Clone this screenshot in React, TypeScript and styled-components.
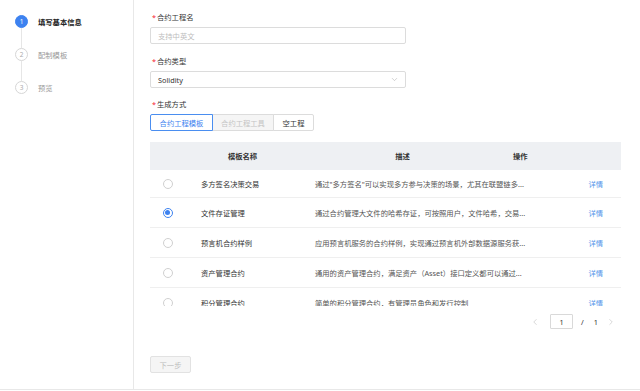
import React from 'react';
import styled, { createGlobalStyle } from 'styled-components';
import { ChevronDown, ChevronLeft, ChevronRight } from 'lucide-react';

const Global = createGlobalStyle`
  html, body { margin: 0; padding: 0; background: #fff; }
  body { font-family: "Noto Sans", "Noto Sans CJK SC", sans-serif; color: #333; }
  * { box-sizing: border-box; }
`;

const FS = '7.3px';
const BLUE = '#3d82f0';

const Page = styled.div`
  display: flex;
  width: 640px;
  height: 390px;
  border-bottom: 1px solid #e8e8e8;
  background: #fff;
  font-size: ${FS};
`;

const Sidebar = styled.aside`
  width: 134px;
  flex-shrink: 0;
  border-right: 1px solid #e8e8e8;
  padding: 15px 0 0 15px;
  display: flex;
  flex-direction: column;
`;

const Step = styled.div`
  display: flex;
  align-items: center;
  gap: 10px;
  height: 13px;
`;

const StepDot = styled.span<{ $active?: boolean }>`
  width: 13px;
  height: 13px;
  border-radius: 50%;
  display: flex;
  align-items: center;
  justify-content: center;
  font-size: 6.5px;
  background: ${p => (p.$active ? BLUE : '#fff')};
  color: ${p => (p.$active ? '#fff' : '#aaa')};
  border: 1px solid ${p => (p.$active ? BLUE : '#d6d6d6')};
`;

const StepText = styled.span<{ $active?: boolean }>`
  color: ${p => (p.$active ? '#222' : '#999')};
  font-weight: ${p => (p.$active ? 600 : 400)};
`;

const Connector = styled.div`
  width: 1px;
  height: 20px;
  margin-left: 6px;
  background: #e6e6e6;
`;

const Main = styled.main`
  flex: 1;
  padding: 12px 19px 0 16px;
  display: flex;
  flex-direction: column;
`;

const Label = styled.div<{ $mt?: number }>`
  height: 10px;
  line-height: 10px;
  margin-top: ${p => p.$mt ?? 0}px;
  margin-bottom: 5px;
  color: #333;
  display: flex;
  align-items: center;
`;

const Star = styled.span`
  color: #f5222d;
  width: 7px;
  padding-left: 2px;
`;

const TextInput = styled.input`
  width: 256px;
  height: 17px;
  border: 1px solid #dcdcdc;
  border-radius: 2px;
  padding: 0 7px;
  font-family: inherit;
  font-size: ${FS};
  color: #333;
  outline: none;
  &::placeholder { color: #bdbdbd; }
`;

const Select = styled.div`
  width: 256px;
  height: 17px;
  border: 1px solid #dcdcdc;
  border-radius: 2px;
  padding: 0 6px 0 7px;
  display: flex;
  align-items: center;
  justify-content: space-between;
  color: #333;
`;

const Segments = styled.div`
  display: flex;
  height: 17px;
`;

const Segment = styled.div<{ $w: number; $state: 'active' | 'disabled' | 'normal' }>`
  width: ${p => p.$w}px;
  display: flex;
  align-items: center;
  justify-content: center;
  border: 1px solid ${p => (p.$state === 'active' ? '#4a8ef0' : '#dcdcdc')};
  margin-left: ${p => (p.$state === 'active' ? 0 : -1)}px;
  background: ${p => (p.$state === 'disabled' ? '#f5f5f5' : '#fff')};
  color: ${p => (p.$state === 'active' ? '#3d82f0' : p.$state === 'disabled' ? '#c4c4c4' : '#333')};
  position: relative;
  z-index: ${p => (p.$state === 'active' ? 1 : 0)};
  &:first-child { border-radius: 2px 0 0 2px; }
  &:last-child { border-radius: 0 2px 2px 0; }
`;

const Table = styled.div`
  margin-top: 11px;
  width: 471px;
`;

const HeaderRow = styled.div`
  display: grid;
  grid-template-columns: 35px 115px 205px 1fr;
  height: 28px;
  align-items: center;
  background: #eef0f3;
  font-weight: 600;
  color: #333;
`;

const HeadCell = styled.div<{ $align?: 'center' | 'left'; $pl?: number }>`
  text-align: ${p => p.$align ?? 'left'};
  padding-left: ${p => p.$pl ?? 0}px;
`;

const Body = styled.div`
  height: 136px;
  overflow: hidden;
`;

const Row = styled.div<{ $h: number }>`
  display: grid;
  grid-template-columns: 35px 115px 230px 1fr;
  height: ${p => p.$h}px;
  align-items: center;
  border-bottom: 1px solid #efefef;
`;

const RadioCell = styled.div`
  display: flex;
  justify-content: center;
`;

const Radio = styled.span<{ $checked?: boolean }>`
  width: 10px;
  height: 10px;
  border-radius: 50%;
  border: 1px solid ${p => (p.$checked ? BLUE : '#d0d0d0')};
  display: flex;
  align-items: center;
  justify-content: center;
  &::after {
    content: '';
    width: 5px;
    height: 5px;
    border-radius: 50%;
    background: ${p => (p.$checked ? BLUE : 'transparent')};
  }
`;

const NameCell = styled.div`
  padding-left: 16px;
  color: #333;
  white-space: nowrap;
`;

const DescCell = styled.div`
  padding: 0 0 0 15px;
  color: #555;
  white-space: nowrap;
`;

const OpCell = styled.div`
  text-align: right;
  padding-right: 18px;
`;

const Link = styled.a`
  color: #5596ea;
  text-decoration: none;
  cursor: pointer;
`;

const Pager = styled.div`
  margin-top: 8px;
  display: flex;
  justify-content: flex-end;
  align-items: center;
  height: 15px;
  padding-right: 5px;
  color: #333;
`;

const PageBox = styled.div`
  width: 23px;
  height: 15px;
  border: 1px solid #d9d9d9;
  border-radius: 1px;
  display: flex;
  align-items: center;
  justify-content: center;
  margin: 0 8px 0 10px;
`;

const PageText = styled.span<{ $mr: number }>`
  margin-right: ${p => p.$mr}px;
`;

const NextButton = styled.button`
  margin-top: 27px;
  width: 41px;
  height: 17px;
  border: 1px solid #e2e2e2;
  border-radius: 2px;
  background: #f5f5f5;
  color: #bcbcbc;
  font-family: inherit;
  font-size: ${FS};
  padding: 0;
`;

const steps = ['填写基本信息', '配制模板', '预览'];

const rows = [
  { name: '多方签名决策交易', desc: '通过"多方签名"可以实现多方参与决策的场景，尤其在联盟链多...' },
  { name: '文件存证管理', desc: '通过合约管理大文件的哈希存证，可按照用户，文件哈希，交易...', checked: true },
  { name: '预言机合约样例', desc: '应用预言机服务的合约样例，实现通过预言机外部数据源服务获...' },
  { name: '资产管理合约', desc: '通用的资产管理合约，满足资产（Asset）接口定义都可以通过...' },
  { name: '积分管理合约', desc: '简单的积分管理合约，有管理员角色和发行控制' },
];

export default function App() {
  return (
    <>
      <Global />
      <Page>
        <Sidebar>
          {steps.map((s, i) => (
            <React.Fragment key={s}>
              {i > 0 && <Connector />}
              <Step>
                <StepDot $active={i === 0}>{i + 1}</StepDot>
                <StepText $active={i === 0}>{s}</StepText>
              </Step>
            </React.Fragment>
          ))}
        </Sidebar>
        <Main>
          <Label><Star>*</Star>合约工程名</Label>
          <TextInput placeholder="支持中英文" />
          <Label $mt={12}><Star>*</Star>合约类型</Label>
          <Select>
            <span>Solidity</span>
            <ChevronDown size={9} color="#b0b0b0" strokeWidth={1.5} />
          </Select>
          <Label $mt={11}><Star>*</Star>生成方式</Label>
          <Segments>
            <Segment $w={63} $state="active">合约工程模板</Segment>
            <Segment $w={62} $state="disabled">合约工程工具</Segment>
            <Segment $w={41} $state="normal">空工程</Segment>
          </Segments>
          <Table>
            <HeaderRow>
              <HeadCell />
              <HeadCell $align="center">模板名称</HeadCell>
              <HeadCell $align="center">描述</HeadCell>
              <HeadCell $pl={8}>操作</HeadCell>
            </HeaderRow>
            <Body>
              {rows.map((r, i) => (
                <Row key={r.name} $h={i === 0 ? 28 : 30}>
                  <RadioCell><Radio $checked={r.checked} /></RadioCell>
                  <NameCell>{r.name}</NameCell>
                  <DescCell>{r.desc}</DescCell>
                  <OpCell><Link>详情</Link></OpCell>
                </Row>
              ))}
            </Body>
          </Table>
          <Pager>
            <ChevronLeft size={10} color="#c0c0c0" strokeWidth={1.5} />
            <PageBox>1</PageBox>
            <PageText $mr={10}>/</PageText>
            <PageText $mr={8}>1</PageText>
            <ChevronRight size={10} color="#c0c0c0" strokeWidth={1.5} />
          </Pager>
          <div>
            <NextButton disabled>下一步</NextButton>
          </div>
        </Main>
      </Page>
    </>
  );
}
